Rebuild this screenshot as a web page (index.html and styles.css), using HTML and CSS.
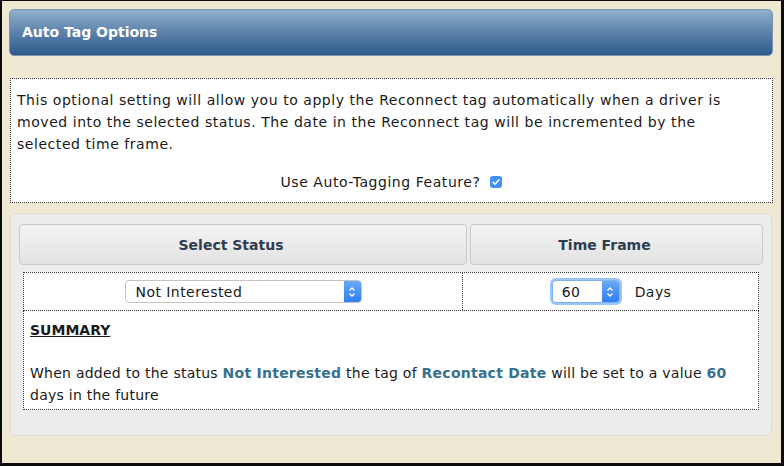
FILE: index.html
```html
<!DOCTYPE html>
<html lang="en">
<head>
    <meta charset="UTF-8">
    <title>Auto Tag Options</title>
    <link rel="stylesheet" href="styles.css">
</head>
<body>
    <div class="page">
        <div class="panel-title">Auto Tag Options</div>

        <div class="intro">
            <p>This optional setting will allow you to apply the Reconnect tag automatically when a driver is moved into the selected status. The date in the Reconnect tag will be incremented by the selected time frame.</p>
            <label class="use-auto">Use Auto-Tagging Feature? <span class="check"><svg width="12" height="12" viewBox="0 0 12 12"><path d="M3 6.2 L5.1 8.3 L9 3.8" fill="none" stroke="#fff" stroke-width="1.6" stroke-linecap="round" stroke-linejoin="round"/></svg></span></label>
        </div>

        <div class="options">
            <div class="option-heads">
                <div class="head-btn">Select Status</div>
                <div class="head-btn">Time Frame</div>
            </div>
            <div class="option-row">
                <div class="cell cell-status">
                    <div class="select">
                        <span>Not Interested</span>
                        <span class="arrows"><svg width="8" height="12" viewBox="0 0 8 12"><path d="M1.5 4.5 L4 2 L6.5 4.5 M1.5 7.5 L4 10 L6.5 7.5" fill="none" stroke="#fff" stroke-width="1.3"/></svg></span>
                    </div>
                </div>
                <div class="cell cell-time">
                    <div class="number">
                        <span>60</span>
                        <span class="arrows"><svg width="8" height="12" viewBox="0 0 8 12"><path d="M1.5 4.5 L4 2 L6.5 4.5 M1.5 7.5 L4 10 L6.5 7.5" fill="none" stroke="#fff" stroke-width="1.3"/></svg></span>
                    </div>
                    <span class="days">Days</span>
                </div>
            </div>
            <div class="summary">
                <h3>SUMMARY</h3>
                <p>When added to the status <b>Not Interested</b> the tag of <b>Recontact Date</b> will be set to a value <b>60</b> days in the future</p>
            </div>
        </div>
    </div>
</body>
</html>
```

FILE: styles.css
```css
body {
    margin: 0;
    background-color: #0c0c0c;
    font-family: "DejaVu Sans", Verdana, sans-serif;
    font-size: 14px;
    letter-spacing: 0.55px;
    color: #1a1a1a;
}

.page {
    margin: 1px 3px 3px 2px;
    height: 462px;
    box-sizing: border-box;
    background-color: #efe8d2;
    padding: 8px 8px 0 7px;
}

.panel-title {
    height: 47px;
    box-sizing: border-box;
    padding: 14px 12px 0;
    border-radius: 5px;
    background: linear-gradient(#90b0cc, #5c82ab 50%, #2e598c);
    border: 1px solid #7d93ab;
    color: #fff;
    font-weight: bold;
    font-size: 14px;
    letter-spacing: 0;
}

.intro {
    margin-top: 22px;
    margin-left: 1px;
    height: 125px;
    box-sizing: border-box;
    border: 1px dotted #333;
    background-color: #fff;
    padding: 10px 22px 0 6px;
}

.intro p {
    margin: 0;
    line-height: 22px;
}

.use-auto {
    display: flex;
    justify-content: center;
    align-items: center;
    gap: 10px;
    margin-top: 19px;
    padding-left: 16px;
}

.check {
    display: inline-flex;
    align-items: center;
    justify-content: center;
    width: 12px;
    height: 12px;
    border-radius: 3px;
    background: #3f8ff4;
}

.options {
    margin: 10px 1px 0 1px;
    height: 223px;
    box-sizing: border-box;
    background-color: #ececec;
    border: 1px solid #dedbd2;
    border-radius: 5px;
    padding: 10px 8px 0;
}

.option-heads {
    display: grid;
    grid-template-columns: 448px 1fr;
    gap: 3px;
}

.head-btn {
    height: 41px;
    box-sizing: border-box;
    display: flex;
    align-items: center;
    justify-content: center;
    padding-right: 24px;
    border: 1px solid #c9c9c9;
    border-radius: 4px;
    background: linear-gradient(#f4f4f4, #e2e2e2);
    color: #2e3d4f;
    font-weight: bold;
    font-size: 14px;
    letter-spacing: 0;
}

.option-row {
    display: grid;
    grid-template-columns: 439px 1fr;
    margin: 7px 4px 0;
    height: 39px;
    box-sizing: border-box;
    border: 1px dotted #333;
    background-color: #fff;
}

.cell {
    display: flex;
    align-items: center;
    justify-content: center;
}

.cell-status {
    border-right: 1px dotted #333;
}

.select {
    width: 237px;
    height: 23px;
    box-sizing: border-box;
    display: flex;
    align-items: center;
    justify-content: space-between;
    border: 1px solid #c4c4c4;
    border-radius: 4px;
    background: #fff;
    padding-left: 10px;
    letter-spacing: 0.45px;
    overflow: hidden;
}

.arrows {
    width: 17px;
    align-self: stretch;
    display: flex;
    align-items: center;
    justify-content: center;
    background: linear-gradient(#6aa9f5, #2d7ef0);
}

.cell-time {
    gap: 15px;
    padding-left: 2px;
    letter-spacing: 0.45px;
}

.number {
    width: 68px;
    height: 23px;
    box-sizing: border-box;
    display: flex;
    align-items: center;
    justify-content: space-between;
    border: 1px solid #7fb0f2;
    border-radius: 4px;
    box-shadow: 0 0 0 2px #9cc6fa;
    background: #fff;
    padding-left: 9px;
    overflow: hidden;
}

.summary {
    margin: 0 4px;
    height: 99px;
    box-sizing: border-box;
    border: 1px dotted #333;
    border-top: none;
    background-color: #fff;
    padding: 11px 6px 0;
}

.summary h3 {
    margin: 0;
    font-size: 14px;
    letter-spacing: 0;
    text-decoration: underline;
}

.summary p {
    margin: 24px 0 0;
    line-height: 22px;
    letter-spacing: 0.25px;
}

.summary b {
    color: #36718f;
}
```
